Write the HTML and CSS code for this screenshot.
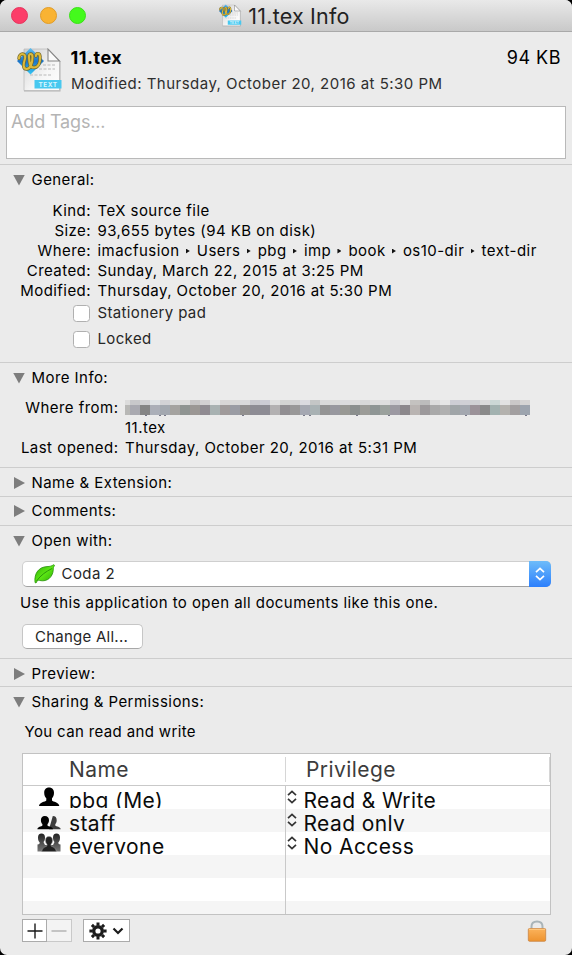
FILE: index.html
```
<!DOCTYPE html>
<html lang="en">
<head>
<meta charset="utf-8">
<title>11.tex Info</title>
<link rel="stylesheet" href="styles.css">
</head>
<body>
<svg class="defs" width="0" height="0" aria-hidden="true">
  <defs>
    <linearGradient id="page" x1="0" y1="0" x2="1" y2="1"><stop offset="0" stop-color="#cfcfcf"/><stop offset=".6" stop-color="#f6f6f6"/><stop offset="1" stop-color="#fff"/></linearGradient>
    <linearGradient id="gem" x1="0" y1="0" x2="0" y2="1"><stop offset="0" stop-color="#5fc0f0"/><stop offset=".5" stop-color="#1c74c8"/><stop offset="1" stop-color="#35c6f4"/></linearGradient>
    <linearGradient id="leaf" x1="0" y1="0" x2="1" y2="1"><stop offset="0" stop-color="#2fae08"/><stop offset=".5" stop-color="#5be613"/><stop offset="1" stop-color="#2aa606"/></linearGradient>
    <linearGradient id="lock" x1="0" y1="0" x2="0" y2="1"><stop offset="0" stop-color="#fbb35c"/><stop offset="1" stop-color="#ee932f"/></linearGradient>
    <linearGradient id="crowd" x1="0" y1="0" x2="0" y2="1"><stop offset="0" stop-color="#222"/><stop offset="1" stop-color="#777"/></linearGradient>
    <symbol id="doc" viewBox="0 0 46 46">
      <path d="M7 2.500h25l11.500 12V44.500H7z" fill="#777" opacity=".5"/>
      <path d="M7 2h24l11.500 12v29.500H7z" fill="url(#page)" stroke="#b8b8b8" stroke-width=".7"/>
      <path d="M31 2v12h11.500z" fill="#fafafa" stroke="#858585" stroke-width="1.100"/>
      <path d="M26 18h12M22 22h16M13 28h22" stroke="#cdcdcd" stroke-width="1.500" stroke-dasharray="3 1.500"/>
      <path d="M13.500 1L27 14 13.500 27.500 0 14z" fill="url(#gem)"/>
      <g fill="none" stroke-linecap="round">
        <path d="M2 11.500c0-6 7.500-6 6 0-1.500 5-2.500 10.500 1.500 10.500s6-6 6-12c0-4-4-4-3.500 0 .3 5 .5 10.500 5 10.500s6.500-5 6-11c-.3-4-4.500-3.500-4-.5" stroke="#6f6428" stroke-width="3.400"/>
        <path d="M2 11.500c0-6 7.500-6 6 0-1.500 5-2.500 10.500 1.500 10.500s6-6 6-12c0-4-4-4-3.500 0 .3 5 .5 10.500 5 10.500s6.500-5 6-11c-.3-4-4.500-3.500-4-.5" stroke="#dcb93a" stroke-width="2.100"/>
      </g>
      <path d="M17.500 33h27v8.500h-27z" fill="#48c8ef"/>
      <text x="31" y="39.700" text-anchor="middle" class="doc-tag">TEXT</text>
    </symbol>
    <symbol id="updown" viewBox="0 0 10 14"><path d="M1 5.200L5 1.500l4 3.700M1 8.800l4 3.700 4-3.700" fill="none" stroke="currentColor" stroke-width="1.700"/></symbol>
  </defs>
</svg>
<div class="window">
  <header class="titlebar">
    <i class="light close"></i><i class="light minimize"></i><i class="light expand"></i>
    <h1 class="title"><svg class="title-icon"><use href="#doc"/></svg><span>11.tex Info</span></h1>
  </header>

  <div class="summary">
    <svg class="file-icon"><use href="#doc"/></svg>
    <div class="file-text">
      <div class="file-line"><b class="file-name">11.tex</b><span class="file-size">94 KB</span></div>
      <div class="file-date">Modified: Thursday, October 20, 2016 at 5:30 PM</div>
    </div>
  </div>
  <div class="tags">Add Tags...</div>

  <section class="section general">
    <h2 class="head open">General:</h2>
    <dl class="facts">
      <dt>Kind:</dt><dd>TeX source file</dd>
      <dt>Size:</dt><dd>93,655 bytes (94 KB on disk)</dd>
      <dt>Where:</dt><dd>imacfusion<i class="sep"></i>Users<i class="sep"></i>pbg<i class="sep"></i>imp<i class="sep"></i>book<i class="sep"></i>os10-dir<i class="sep"></i>text-dir</dd>
      <dt>Created:</dt><dd>Sunday, March 22, 2015 at 3:25 PM</dd>
      <dt>Modified:</dt><dd>Thursday, October 20, 2016 at 5:30 PM</dd>
    </dl>
    <div class="checks">
      <div class="check"><i class="box"></i>Stationery pad</div>
      <div class="check"><i class="box"></i>Locked</div>
    </div>
  </section>

  <section class="section more">
    <h2 class="head open">More Info:</h2>
    <dl class="facts wide">
      <dt>Where from:</dt><dd><svg class="mosaic" id="mosaic" viewBox="0 0 405 16"></svg>11.tex</dd>
      <dt>Last opened:</dt><dd>Thursday, October 20, 2016 at 5:31 PM</dd>
    </dl>
  </section>

  <section class="section name"><h2 class="head">Name &amp; Extension:</h2></section>
  <section class="section comments"><h2 class="head">Comments:</h2></section>

  <section class="section openwith">
    <h2 class="head open">Open with:</h2>
    <div class="select">
      <svg class="leaf" viewBox="0 0 22 20"><path d="M1 18.500C0 9 5 3 13 2.600c3-.1 5-.6 6.500-1.900l1 .6-1.200 2.500c.4 7-3.800 12.900-10.500 13-2.500 0-4-.8-5.300-.3L2 19z" fill="url(#leaf)" stroke="#249008" stroke-width=".8"/><path d="M2.500 17C7 11 12 7.500 18 4.500" stroke="#2c980b" stroke-width="1" fill="none"/></svg>
      <span>Coda 2</span>
      <i class="knob"><svg viewBox="0 0 10 14"><use href="#updown"/></svg></i>
    </div>
    <p class="hint">Use this application to open all documents like this one.</p>
    <button class="change">Change All...</button>
  </section>

  <section class="section preview"><h2 class="head">Preview:</h2></section>

  <section class="section sharing">
    <h2 class="head open">Sharing &amp; Permissions:</h2>
    <p class="access">You can read and write</p>
    <div class="table">
      <div class="thead"><span>Name</span><span class="priv">Privilege</span></div>
      <div class="row"><svg class="who" viewBox="0 0 24 22"><path d="M12 1.500c3.200 0 5 2.200 5 5.200 0 2.300-.8 4.300-2 5.600v2.200c1 1.500 7 1.500 7.300 5.500H2c.3-4 6.300-4 7.300-5.500v-2.200C8 11 7.200 9 7.200 6.700c0-3 1.700-5.200 4.800-5.200z"/></svg><span class="cell">pbg (Me)</span><svg class="arrows"><use href="#updown"/></svg><span class="cell">Read &amp; Write</span></div>
      <div class="row"><svg class="who" viewBox="0 0 24 22"><path d="M15.800 7c2.700 0 3.900 1.600 3.900 4.200 0 1.900-.6 3-1.400 3.800v1.500c1 1.200 5.200 1 5.400 3.700H12z" fill="#3c3c3c"/><path d="M7.800 7c2.800 0 4.200 1.700 4.200 4.200 0 1.900-.7 3-1.500 3.800v1.500c1 1.200 5.300 1 5.500 3.700H.4c.2-2.700 4-2.500 5-3.700V15c-.8-.8-1.500-1.900-1.500-3.800C3.900 8.700 5.200 7 7.800 7z"/></svg><span class="cell">staff</span><svg class="arrows"><use href="#updown"/></svg><span class="cell">Read only</span></div>
      <div class="row"><svg class="who" viewBox="0 0 24 22"><path d="M.5 19.500v-7c2 0 2-1 2.200-2C1.500 9 1 8 1 5.500 1 3 2.300 1.500 4.500 1.500S8 3 8 5.500c0 2-.5 3.500-1.500 4.500l1.500 3h8l1.500-3C16.500 9 16 7.500 16 5.500c0-2.500 1.300-4 3.500-4S23 3 23 5.500c0 2.500-.5 3.500-1.700 5 .2 1 .2 2 2.200 2v7z" fill="url(#crowd)"/><path d="M12 4.500c2.300 0 3.500 1.500 3.500 3.800 0 2-.7 3.200-1.500 4v1.500c1 1.200 5 1.200 5.200 5.700H4.800c.2-4.500 4.200-4.500 5.200-5.700v-1.500c-.8-.8-1.500-2-1.500-4 0-2.300 1.200-3.800 3.500-3.800z" fill="#222" stroke="#999" stroke-width=".6"/></svg><span class="cell">everyone</span><svg class="arrows"><use href="#updown"/></svg><span class="cell">No Access</span></div>
      <div class="row"></div><div class="row"></div><div class="row last"></div>
    </div>
    <div class="tools">
      <span class="tool plus"><svg width="18" height="18" viewBox="0 0 18 18"><path d="M9 1.500v15M1.500 9h15" stroke="#1a1a1a" stroke-width="1.400"/></svg></span><span class="tool minus"><svg width="18" height="18" viewBox="0 0 18 18"><path d="M1.500 9h15" stroke="#b5b5b5" stroke-width="1.400"/></svg></span>
      <span class="tool action">
        <svg width="18" height="18" viewBox="0 0 18 18"><circle cx="9" cy="9" r="4.300" fill="none" stroke="#1c1c1c" stroke-width="3.400"/><path d="M9 .4v3M9 14.600v3M.4 9h3M14.600 9h3M2.900 2.900L5 5M13 13l2.100 2.100M2.900 15.100L5 13M13 5l2.100-2.100" stroke="#1c1c1c" stroke-width="3"/></svg>
        <svg width="12" height="8" viewBox="0 0 12 8"><path d="M1.500 1.500L6 6l4.500-4.500" fill="none" stroke="#1c1c1c" stroke-width="2.200"/></svg>
      </span>
      <svg class="padlock" viewBox="0 0 20 22"><path d="M4.500 9V6.500C4.500 3 6.800 1.500 10 1.500s5.500 1.500 5.500 5V9" fill="none" stroke="#a9b4b8" stroke-width="2"/><rect x="1.300" y="8.500" width="17.400" height="12.800" rx="1.200" fill="url(#lock)" stroke="#c98444" stroke-width=".8"/><path d="M2 9.300h16" stroke="#ffd08c" stroke-width=".9"/></svg>
    </div>
  </section>
</div>
<script src="mosaic.js"></script>
</body>
</html>
```
FILE: mosaic.js
```
// Redacted address: two rows of grey tiles, 10px wide after a 5px lead-in.
const upper = "dcdcdc c8c8ca d0d0d2 dfe3e6 d2d2d6 dcdcdc dcdcdc c8c6c6 d2cfd2 e3e6e6 d8d5d5 d8d8d8 dadada c8c8ce ccccd4 e0e0e0 d3d3d3 d3d3d3 dadae0 c4c6c6 dadada dadada dcdcdc dcdcdc d8d8d8 dedede dedede d0ced4 dedede c4c2c0 bcbcbc dcdcdc e6e6e6 cdcdd4 d0d0d6 d0d0d4 dadada ccd8d6 e2e2e2 cac8c8 d4d4d4".split(" ");
const lower = "b8b8b6 a9a9b0 848484 abafb8 a3a8b0 a5a3a0 8f9492 9b9794 908b92 a8b2b2 a09a9a 9a9ca4 939190 8d8c94 8d8c94 b3b1b2 918e92 999898 a5a8b2 a9b2b4 949494 98989f 999994 8b8f8e 9c9c98 8f9695 9ba19d 9c99a2 8c888c b9b4b2 9c999b a9a9a9 b0b0b0 a0a5a8 a4a8b0 9b9299 8a8a8a a2b2b0 b4b2ae a29fa0 9ca4ae".split(" ");
const svg = document.getElementById("mosaic");
function tile(x, y, w, h, fill) {
  const r = document.createElementNS("http://www.w3.org/2000/svg", "rect");
  Object.entries({ x, y, width: w, height: h, fill }).forEach(([k, v]) => r.setAttribute(k, v));
  svg.append(r);
}
lower.forEach((c, i) => {
  const x = i ? i * 10 - 5 : 0, w = i ? 10 : 5;
  tile(x, 0, w, 5, "#" + upper[i]);
  tile(x, 5, w, 10, "#" + c);
});
[20, 34, 39, 117, 178, 184, 231, 263, 340, 400].forEach(x => tile(x, 15, 2, 1, "#777788"));
```
FILE: styles.css
```
* { box-sizing: border-box; }
body { margin: 0; background: #000; font: 15px/20px Inter, "Liberation Sans", sans-serif; letter-spacing: .44px; color: #000; }
h1, h2, p, dl, dd { margin: 0; font-weight: 400; font-size: inherit; }
.defs { position: absolute; }
svg { display: block; flex: none; }
.window { width: 572px; height: 955px; background: #ebebeb; border-radius: 7px; overflow: hidden; }

.titlebar { display: flex; align-items: center; gap: 11.500px; height: 32px; padding-left: 11.300px; background: linear-gradient(#e9e9e9, #c9c9c9); border-bottom: 1px solid #a9a9a9; }
.light { width: 17.200px; height: 17.200px; border-radius: 50%; }
.close { background: #fc3d69; border: .5px solid #e5345d; }
.minimize { background: #f9b333; border: .5px solid #e09c28; }
.expand { background: #44fa1c; border: .5px solid #3ae018; }
.title { display: flex; align-items: center; margin-left: 122px; gap: 6px; font-size: 21.500px; line-height: 30px; color: #222; letter-spacing: .2px; }
.title-icon { width: 23px; height: 23px; }

.summary { display: flex; height: 74px; padding: 15px 11px 0 17px; }
.file-icon { width: 46px; height: 46px; }
.file-text { flex: 1; padding-left: 7.500px; }
.file-line { display: flex; justify-content: space-between; font-size: 18px; line-height: 22px; color: #000; }
.file-name { letter-spacing: .5px; }
.file-size { letter-spacing: .5px; }
.file-date { margin-top: 5px; color: #2e2e2e; padding-left: .5px; letter-spacing: .47px; }
.tags { height: 53px; margin: 0 6px; padding: 3px 4px; background: #fff; border: 1px solid #b9b9b9; color: #b4b4b4; font-size: 18px; line-height: 23px; letter-spacing: -.15px; }

.section { border-top: 1px solid #cdcdcd; padding-top: 5px; }
.general { height: 198px; margin-top: 5px; }
.more { height: 105px; }
.name { height: 29px; }
.comments { height: 29px; padding-top: 4px; }
.openwith { height: 133px; }
.preview { height: 28px; }
.sharing { height: 268px; }
.head { display: flex; align-items: center; height: 20px; padding-left: 14px; }
.head::before { content: ""; width: 11px; height: 12px; margin-right: 6.500px; background: #7d7d7d; clip-path: polygon(0 0, 100% 50%, 0 100%); }
.head.open::before { width: 12px; height: 11px; margin: 0 6.500px 0 -1px; clip-path: polygon(0 0, 100% 0, 50% 100%); }
.facts { display: grid; grid-template-columns: 91px 1fr; column-gap: 6.500px; margin-top: 11px; }
.facts dt { text-align: right; }
.facts.wide { grid-template-columns: 118.500px 1fr; margin-top: 10px; letter-spacing: .47px; }
.sep { display: inline-block; width: 4px; height: 5px; margin: 0 7px 2.500px 6.300px; background: #111; clip-path: polygon(0 0, 100% 50%, 0 100%); }
.checks { margin-top: -1px; letter-spacing: .36px; }
.check { display: flex; align-items: center; height: 26px; padding-left: 73px; color: #262626; }
.box { width: 17px; height: 17px; margin-right: 7.500px; background: #fff; border: 1px solid #b0b0b0; border-radius: 3.500px; }
.mosaic { width: 405px; height: 16px; margin: 2px 0 2px; }

.select { display: flex; align-items: center; width: 529px; height: 26px; margin: 10px 0 0 22px; padding-left: 11px; background: #fff; border: 1px solid #cfcfcf; border-bottom-color: #a2a2a2; border-radius: 5px; color: #262626; }
.leaf { width: 22px; height: 20px; margin-right: 5.500px; }
.knob { width: 22px; height: 26px; margin: 0 -1px 0 auto; padding: 6px; background: linear-gradient(#6dbcfa, #2c7ffc); border-radius: 0 5px 5px 0; color: #fff; }
.knob svg { width: 10px; height: 14px; }
.hint { margin: 6px 0 0 20px; }
.change { display: block; height: 25px; width: 121px; margin: 11px 0 0 22px; padding: 0 2px 0 0; font: inherit; letter-spacing: .25px; color: #262626; background: #fff; border: 1px solid #c6c6c6; border-bottom-color: #a8a8a8; border-radius: 5px; }

.access { margin: 10px 0 0 24.500px; letter-spacing: .36px; }
.table { position: relative; width: 529px; height: 162px; margin: 11px 0 0 22px; background: #fff; border: 1px solid #c2c2c2; font-size: 21px; overflow: hidden; }
.table::after { content: ""; position: absolute; left: 262px; top: 32px; bottom: 0; width: 1px; background: #c9c9c9; }
.thead { display: flex; height: 32px; padding-left: 46px; border-bottom: 1px solid #c9c9c9; line-height: 31px; color: #3c3c3c; }
.thead span { width: 216px; }
.thead .priv { width: 265px; height: 25px; line-height: 25px; margin-top: 3px; padding-left: 20px; border: solid #d6d6d6; border-width: 0 1px; }
.row { display: grid; grid-template-columns: 46px 216.500px 18px 1fr; height: 23px; color: #0b0b0b; }
.row:nth-child(odd) { background: #f5f5f5; }
.who { width: 24px; height: 22px; margin-left: 14px; }
.cell { height: 22px; line-height: 30px; overflow: hidden; letter-spacing: .4px; }
.arrows { width: 10px; height: 14px; margin: 4px 0 0 1.500px; color: #333; }

.tools { display: flex; height: 23px; margin: 4px 0 0 22px; padding-right: 25px; }
.tool { display: flex; align-items: center; justify-content: center; width: 25px; height: 23px; background: #fff; border: 1px solid #ababab; }
.minus { background: #f3f3f3; border-color: #c9c9c9; border-left: 0; }
.action { width: 47px; margin-left: 11px; gap: 5px; }
.padlock { width: 20px; height: 22px; margin: 1px 0 0 auto; }
.doc-tag { font: bold 6.500px Inter, sans-serif; letter-spacing: .5px; fill: #d9f6ff; }
```
